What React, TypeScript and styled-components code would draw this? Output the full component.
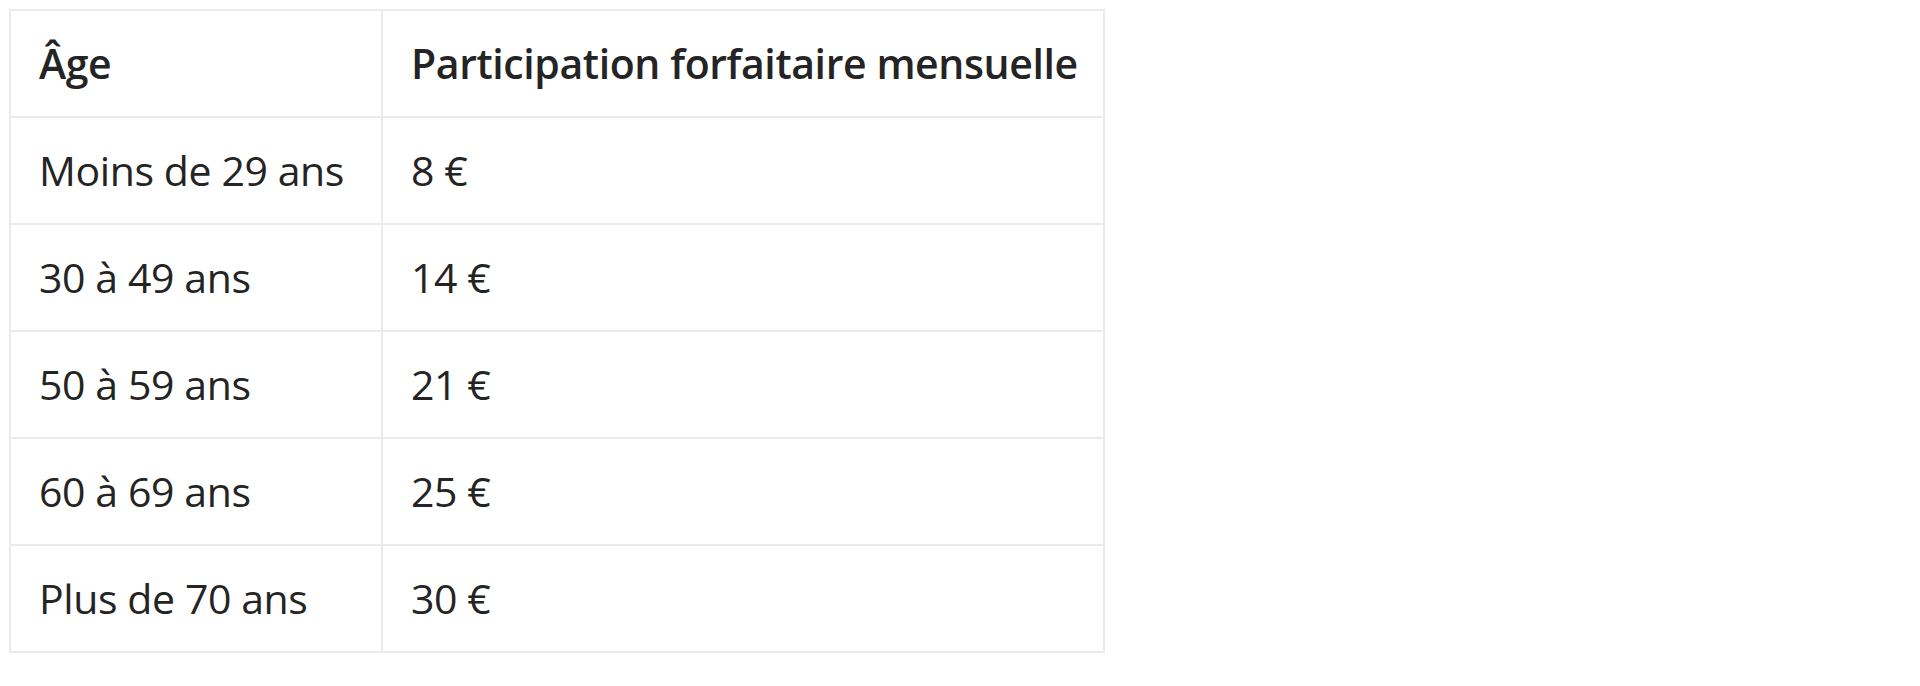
import React from "react";
import styled, { createGlobalStyle } from "styled-components";

const Global = createGlobalStyle`
  html, body { margin: 0; padding: 0; background: #ffffff; }
  body { font-family: "Open Sans", "Noto Sans", sans-serif; color: #242424; }
`;

const Page = styled.div`
  padding: 9px 0 0 9px;
`;

const Table = styled.table`
  border-collapse: collapse;
  width: 1094px;
  table-layout: fixed;
  font-family: "Open Sans", "Noto Sans", sans-serif;
  font-size: 41px;
  color: #242424;
`;

const Col = styled.col<{ $w: number }>`
  width: ${(p) => p.$w}px;
`;

const Cell = styled.td`
  border: 2px solid #ebebeb;
  height: 105px;
  padding: 0 0 0 28px;
  vertical-align: middle;
  white-space: nowrap;
  line-height: 1;
  letter-spacing: -0.4px;
`;

const HeadCell = styled(Cell).attrs({ as: "th" })`
  font-weight: 600;
  text-align: left;
`;

const rows: [string, string][] = [
  ["Moins de 29 ans", "8 €"],
  ["30 à 49 ans", "14 €"],
  ["50 à 59 ans", "21 €"],
  ["60 à 69 ans", "25 €"],
  ["Plus de 70 ans", "30 €"],
];

export default function App() {
  return (
    <>
      <Global />
      <Page>
        <Table>
          <colgroup>
            <Col $w={372} />
            <Col $w={722} />
          </colgroup>
          <thead>
            <tr>
              <HeadCell>Âge</HeadCell>
              <HeadCell>Participation forfaitaire mensuelle</HeadCell>
            </tr>
          </thead>
          <tbody>
            {rows.map(([age, amount]) => (
              <tr key={age}>
                <Cell>{age}</Cell>
                <Cell>{amount}</Cell>
              </tr>
            ))}
          </tbody>
        </Table>
      </Page>
    </>
  );
}
